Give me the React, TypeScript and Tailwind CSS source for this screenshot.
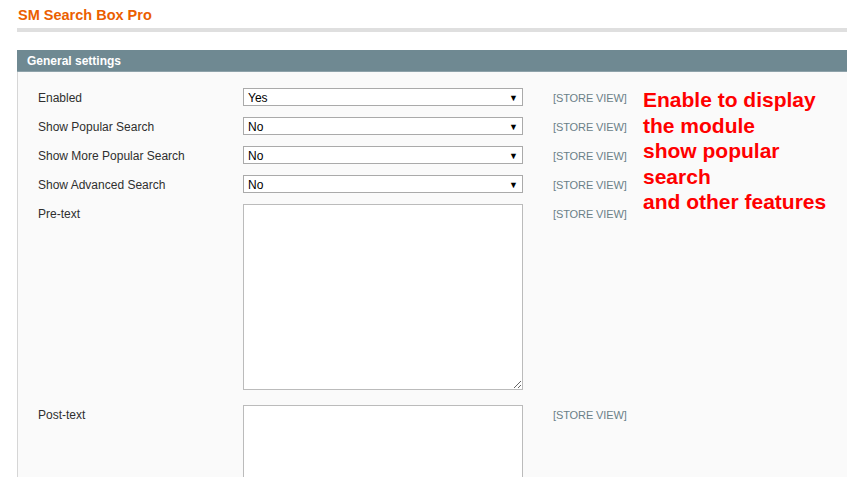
import React from "react";

const font = { fontFamily: '"Liberation Sans", Arial, sans-serif' };

function Select({ value }: { value: string }) {
  return (
    <div className="relative flex h-[18px] w-[280px] items-center border border-[#aaaaaa] bg-white pl-[4px] pt-[1px] text-[12px] leading-none text-[#000]">
      <span>{value}</span>
      <span className="absolute right-[4px] top-[4px] text-[9px] leading-[10px] text-[#000]">▼</span>
    </div>
  );
}

function StoreView() {
  return <div className="h-[18px] w-[90px] pl-[10px] pt-[2px] text-[11px] leading-[16px] tracking-[-0.1px] text-[#6b7f88]">[STORE VIEW]</div>;
}

function Row({ label, children, className }: { label: string; children: React.ReactNode; className?: string }) {
  return (
    <div className={"flex items-start " + (className ?? "")}>
      <div className="h-[18px] w-[205px] pt-[2px] text-[12px] leading-[16px] text-[#2f2f2f]">{label}</div>
      <div className="w-[280px]">{children}</div>
      <div className="w-[20px]" />
      <StoreView />
    </div>
  );
}

export default function App() {
  return (
    <div style={font} className="h-[477px] w-[847px] overflow-hidden bg-white">
      <div className="pl-[18px] pt-[7px] text-[14.5px] font-bold leading-[17px] text-[#eb5e00]">SM Search Box Pro</div>
      <div className="ml-[17px] mt-[4px] h-[4px] bg-[#dfdfdf]" />
      <div className="ml-[17px] mt-[18px]">
        <div className="flex h-[22px] items-center border-b border-[#8ea2aa] bg-[#6f8992] pl-[10px] text-[12px] font-bold text-white">
          General settings
        </div>
        <div className="flex h-[420px] border-l border-[#d6d6d6] bg-[#fafafa] pl-[20px] pt-[16px]">
          <div className="flex flex-col">
            <Row label="Enabled"><Select value="Yes" /></Row>
            <Row label="Show Popular Search" className="mt-[11px]"><Select value="No" /></Row>
            <Row label="Show More Popular Search" className="mt-[11px]"><Select value="No" /></Row>
            <Row label="Show Advanced Search" className="mt-[11px]"><Select value="No" /></Row>
            <Row label="Pre-text" className="mt-[11px]">
              <textarea className="block h-[186px] w-[280px] resize border border-[#bbbbbb] bg-white outline-none" />
            </Row>
            <Row label="Post-text" className="mt-[15px]">
              <textarea className="block h-[120px] w-[280px] border border-[#bbbbbb] bg-white outline-none" />
            </Row>
          </div>
          <div className="ml-[10px] text-[21px] font-bold leading-[25.5px] text-[#ff0000]" style={{ marginTop: -1 }}>
            Enable to display
            <br />
            the module
            <br />
            show popular
            <br />
            search
            <br />
            and other features
          </div>
        </div>
      </div>
    </div>
  );
}
